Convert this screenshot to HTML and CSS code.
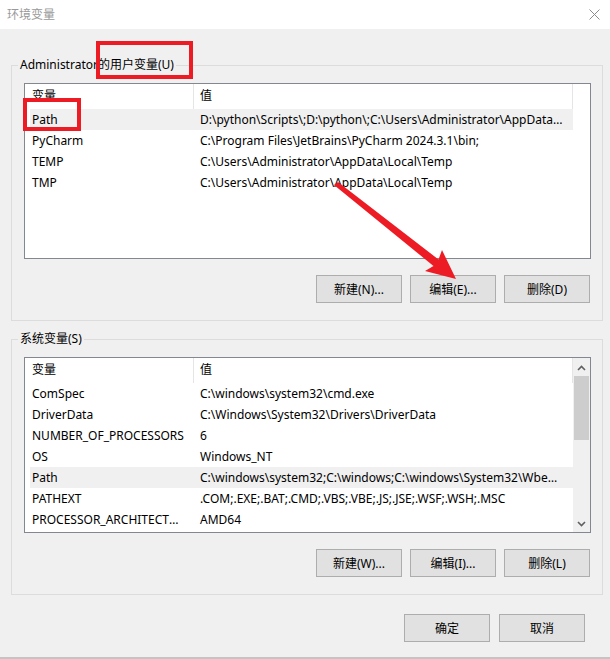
FILE: index.html
```html
<!DOCTYPE html>
<html lang="zh-CN">
<head>
<meta charset="utf-8">
<title>环境变量</title>
<link rel="stylesheet" href="styles.css">
</head>
<body>
<div class="window">
  <div class="titlebar">
    <span class="title">环境变量</span>
    <svg class="close" width="11" height="11" viewBox="0 0 11 11"><path d="M0.5 0.5L10.5 10.5M10.5 0.5L0.5 10.5" stroke="#8c8c8c" stroke-width="1" fill="none"/></svg>
  </div>

  <div class="content">
    <fieldset class="group">
      <legend>Administrator的用户变量(U)</legend>
      <div class="group-body">
        <div class="list">
          <div class="list-main">
            <div class="list-head">
              <div class="hcell hname">变量</div>
              <div class="hcell hvalue">值</div>
            </div>
            <div class="row selected"><span class="cell name">Path</span><span class="cell value">D:\python\Scripts\;D:\python\;C:\Users\Administrator\AppData\Local\Microsoft\WindowsApps;</span></div>
            <div class="row"><span class="cell name">PyCharm</span><span class="cell value">C:\Program Files\JetBrains\PyCharm 2024.3.1\bin;</span></div>
            <div class="row"><span class="cell name">TEMP</span><span class="cell value">C:\Users\Administrator\AppData\Local\Temp</span></div>
            <div class="row"><span class="cell name">TMP</span><span class="cell value">C:\Users\Administrator\AppData\Local\Temp</span></div>
          </div>
          <div class="list-side"></div>
        </div>
        <div class="buttons">
          <button class="btn">新建(N)...</button>
          <button class="btn">编辑(E)...</button>
          <button class="btn">删除(D)</button>
        </div>
      </div>
    </fieldset>

    <fieldset class="group system">
      <legend>系统变量(S)</legend>
      <div class="group-body">
        <div class="list">
          <div class="list-main">
            <div class="list-head">
              <div class="hcell hname">变量</div>
              <div class="hcell hvalue">值</div>
            </div>
            <div class="row"><span class="cell name">ComSpec</span><span class="cell value">C:\windows\system32\cmd.exe</span></div>
            <div class="row"><span class="cell name">DriverData</span><span class="cell value">C:\Windows\System32\Drivers\DriverData</span></div>
            <div class="row"><span class="cell name">NUMBER_OF_PROCESSORS</span><span class="cell value">6</span></div>
            <div class="row"><span class="cell name">OS</span><span class="cell value">Windows_NT</span></div>
            <div class="row selected"><span class="cell name">Path</span><span class="cell value">C:\windows\system32;C:\windows;C:\windows\System32\Wbem;C:\windows\System32\WindowsPowerShell\v1.0\</span></div>
            <div class="row"><span class="cell name">PATHEXT</span><span class="cell value">.COM;.EXE;.BAT;.CMD;.VBS;.VBE;.JS;.JSE;.WSF;.WSH;.MSC</span></div>
            <div class="row"><span class="cell name">PROCESSOR_ARCHITECTURE</span><span class="cell value">AMD64</span></div>
          </div>
          <div class="list-side scrollbar">
            <div class="sb-btn sb-up"><svg width="9" height="6" viewBox="0 0 9 6"><path d="M1 5L4.5 1.5L8 5" stroke="#606060" stroke-width="1.6" fill="none"/></svg></div>
            <div class="sb-track"><div class="sb-thumb"></div></div>
            <div class="sb-btn sb-down"><svg width="9" height="6" viewBox="0 0 9 6"><path d="M1 1L4.5 4.5L8 1" stroke="#606060" stroke-width="1.6" fill="none"/></svg></div>
          </div>
        </div>
        <div class="buttons">
          <button class="btn">新建(W)...</button>
          <button class="btn">编辑(I)...</button>
          <button class="btn">删除(L)</button>
        </div>
      </div>
    </fieldset>

    <div class="dialog-buttons">
      <button class="btn">确定</button>
      <button class="btn">取消</button>
    </div>
  </div>

  <div class="bottom-edge"></div>

  <!-- red markup drawn over the dialog -->
  <svg class="annotations" width="610" height="659" viewBox="0 0 610 659">
    <rect x="98" y="43" width="93" height="34" fill="none" stroke="#ed1c24" stroke-width="4"/>
    <rect x="25" y="100" width="54" height="29" fill="none" stroke="#ed1c24" stroke-width="4"/>
    <polygon points="338,182 438.5,259.5 442,250 456,279 425,271 433.5,266 334,185" fill="#ed1c24"/>
  </svg>
</div>
</body>
</html>
```

FILE: styles.css
```css
html, body {
  margin: 0;
  padding: 0;
}

body {
  background: #f0f0f0;
  font-family: "Noto Sans", "Noto Sans CJK SC", sans-serif;
  font-size: 12px;
  color: #000;
}

.window {
  position: relative;
  width: 610px;
  height: 659px;
  display: flex;
  flex-direction: column;
  overflow: hidden;
  background: #f0f0f0;
}

/* title bar */
.titlebar {
  height: 29px;
  flex: none;
  background: #fff;
  display: flex;
  align-items: center;
  justify-content: space-between;
  padding: 0 10px 0 7px;
  box-sizing: border-box;
}

.title {
  color: #999;
  line-height: 16px;
}

.close {
  display: block;
}

/* dialog content */
.content {
  padding: 28px 8px 0 11px;
  display: flex;
  flex-direction: column;
}

.group {
  margin: 0;
  padding: 0;
  width: 592px;
  box-sizing: border-box;
  border: 1px solid #dcdcdc;
  min-width: 0;
}

.group.system {
  margin-top: 10px;
}

.group legend {
  margin-left: 6px;
  padding: 0 2px;
  line-height: 16px;
}

.group-body {
  padding: 10px 11px 17px 12px;
}

/* list view */
.list {
  width: 567px;
  height: 176px;
  box-sizing: border-box;
  border: 1px solid #828790;
  background: #fff;
  display: flex;
}

.list-main {
  width: 548px;
  flex: none;
}

.list-side {
  width: 17px;
  flex: none;
}

.list-head {
  height: 25px;
  display: flex;
}

.hcell {
  box-sizing: border-box;
  height: 25px;
  line-height: 24px;
  border-right: 1px solid #e5e5e5;
}

.hname {
  width: 169px;
  padding-left: 7px;
}

.hvalue {
  width: 379px;
  padding-left: 6px;
}

.row {
  display: flex;
  height: 21px;
  line-height: 21px;
  margin-left: 5px;
  width: 543px;
}

.row.selected {
  background: #f0f0f0;
}

.cell {
  display: block;
  box-sizing: border-box;
  white-space: nowrap;
  overflow: hidden;
  text-overflow: ellipsis;
}

.cell.name {
  width: 163px;
  padding: 0 6px 0 2px;
}

.cell.value {
  width: 380px;
  padding: 0 6px 0 7px;
}

/* vertical scrollbar */
.scrollbar {
  display: flex;
  flex-direction: column;
  background: #f0f0f0;
}

.sb-btn {
  height: 17px;
  flex: none;
  display: flex;
  justify-content: center;
}

.sb-up {
  align-items: flex-end;
  padding-bottom: 4px;
  box-sizing: border-box;
}

.sb-down {
  align-items: center;
}

.sb-btn svg {
  display: block;
}

.sb-track {
  flex: 1;
}

.sb-thumb {
  margin: 1px 1px 0 1px;
  height: 64px;
  background: #cdcdcd;
}

/* buttons */
.buttons {
  display: flex;
  gap: 8px;
  justify-content: flex-end;
  margin-top: 16px;
  padding-right: 1px;
}

.btn {
  width: 86px;
  height: 28px;
  box-sizing: border-box;
  margin: 0;
  padding: 0;
  border: 1px solid #adadad;
  background: #e1e1e1;
  font: inherit;
  color: #000;
  text-align: center;
}

.dialog-buttons {
  display: flex;
  gap: 9px;
  justify-content: flex-end;
  margin-top: 19px;
  padding-right: 17px;
}

.bottom-edge {
  margin-top: auto;
  height: 2px;
  background: #c4c4c4;
}

/* markup layer */
.annotations {
  position: absolute;
  left: 0;
  top: 0;
  pointer-events: none;
}
```
